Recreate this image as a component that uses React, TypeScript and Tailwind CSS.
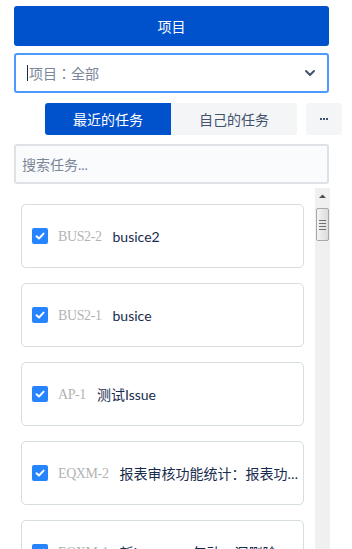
import React from "react";

const tasks = [
  { key: "BUS2-2", summary: "busice2" },
  { key: "BUS2-1", summary: "busice" },
  { key: "AP-1", summary: "测试Issue" },
  { key: "EQXM-2", summary: "报表审核功能统计：报表功能统计与审核流程" },
  { key: "EQXM-1", summary: "新Issue，，，年动，漏删除" },
];

const font = { fontFamily: 'Lato, "Noto Sans CJK SC", sans-serif' };

function Check() {
  return (
    <div className="w-4 h-4 shrink-0 rounded-[2px] bg-[#2684ff] flex items-center justify-center">
      <svg width="12" height="12" viewBox="0 0 12 12" fill="none">
        <path d="M2.5 6.2 L5 8.5 L9.6 3.6" stroke="white" strokeWidth="1.9" strokeLinecap="round" strokeLinejoin="round" />
      </svg>
    </div>
  );
}

export default function App() {
  return (
    <div className="w-[352px] h-[549px] overflow-hidden bg-white text-[14px]" style={font}>
      <div className="pt-[6px] pl-[14px] pr-[23px] flex flex-col">
        <button className="h-[40px] w-full rounded-[3px] bg-[#0052cc] text-white text-[14px] flex items-center justify-center">
          项目
        </button>
        <div className="mt-[7px] h-[40px] w-full rounded-[3px] border-2 border-[#4c9aff] flex items-center pl-[11px] pr-[10px]">
          <span className="w-px h-[16px] bg-[#172b4d] mr-px" />
          <span className="text-[#7a869a] flex-1" style={{ fontFamily: '"Noto Sans CJK JP", sans-serif' }}>项目：全部</span>
          <svg width="14" height="14" viewBox="0 0 14 14" fill="none">
            <path d="M3 5 L7 9 L11 5" stroke="#42526e" strokeWidth="2" strokeLinecap="round" strokeLinejoin="round" />
          </svg>
        </div>
      </div>
      <div className="mt-[10px] flex pl-[45px] h-[32px]">
        <div className="w-[126px] h-full bg-[#0052cc] text-white rounded-l-[3px] flex items-center justify-center">最近的任务</div>
        <div className="w-[126px] h-full bg-[#f4f5f7] text-[#42526e] rounded-r-[3px] flex items-center justify-center">自己的任务</div>
        <div className="ml-[9px] w-[36px] h-full bg-[#f4f5f7] rounded-[3px] flex items-center justify-center gap-[1px]">
          <span className="w-[2px] h-[2px] bg-[#42526e]" />
          <span className="w-[2px] h-[2px] bg-[#42526e]" />
          <span className="w-[2px] h-[2px] bg-[#42526e]" />
        </div>
      </div>
      <div className="mt-[9px] ml-[14px] w-[315px] h-[40px] bg-[#fafbfc] border-2 border-[#dfe1e6] rounded-[3px] flex items-center pl-[6px] text-[#7a869a]">
        搜索任务...
      </div>
      <div className="mt-[4px] flex h-[362px]">
        <div className="pl-[21px] pt-[16px] w-[304px] flex flex-col gap-[15px] overflow-hidden">
          {tasks.map((t) => (
            <div key={t.key} className="shrink-0 h-[64px] border border-[#d5dde0] rounded-[5px] flex items-center pl-[10px] pr-[3px]">
              <Check />
              <span className="ml-[10px] text-[#b3b3b3] text-[14px] tracking-[-0.4px] shrink-0" style={{ fontFamily: '"Liberation Serif", serif' }}>{t.key}</span>
              <span className="ml-[11px] text-[#172b4d] truncate">{t.summary}</span>
            </div>
          ))}
        </div>
        <div className="ml-[11px] w-[15px] h-full bg-[#f0f0f0] flex flex-col items-center">
          <svg className="mt-[5px]" width="9" height="6" viewBox="0 0 9 6">
            <path d="M1 5 L4.5 1.5 L8 5 Z" fill="#505050" />
          </svg>
          <div className="mt-[9px] w-[13px] h-[33px] rounded-[2px] border border-[#a8a8a8] bg-gradient-to-r from-[#f4f4f4] to-[#dcdcdc] flex flex-col items-center justify-center gap-[2px]">
            <span className="w-[7px] h-px bg-[#707070]" />
            <span className="w-[7px] h-px bg-[#707070]" />
            <span className="w-[7px] h-px bg-[#707070]" />
            <span className="w-[7px] h-px bg-[#707070]" />
          </div>
        </div>
      </div>
    </div>
  );
}
